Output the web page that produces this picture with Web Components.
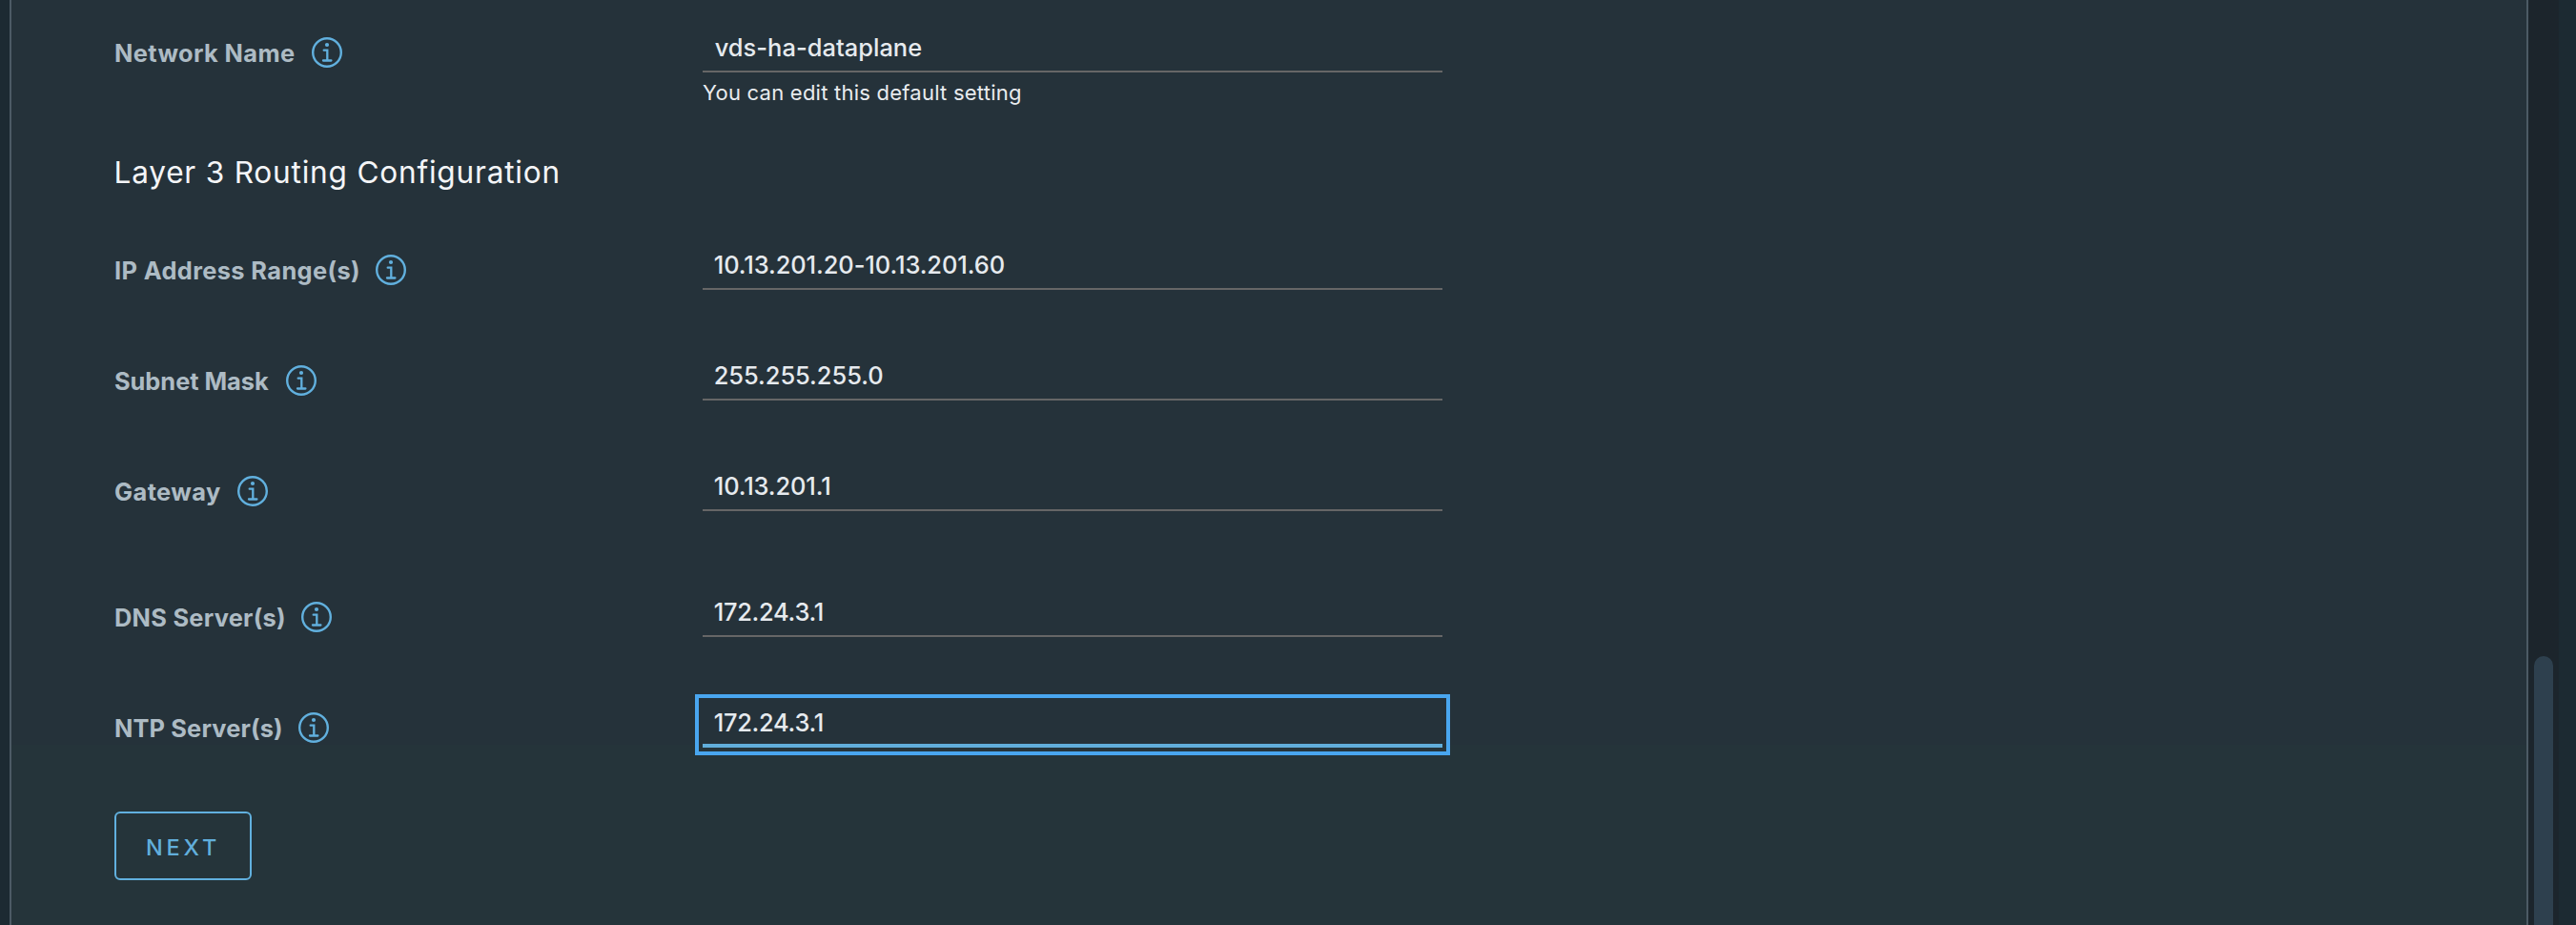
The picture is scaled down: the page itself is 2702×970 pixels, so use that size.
<!DOCTYPE html>
<html lang="en">
<head>
<meta charset="utf-8">
<title>Layer 3 Routing Configuration</title>
<style>
html, body { margin: 0; height: 100%; overflow: hidden; background: #1c2a32; }
body { font-family: Inter, "Liberation Sans", sans-serif; }
</style>
</head>
<body>
<wizard-shell>
  <network-form>
    <form-row ink="188" value-ink="216.5" label="Network Name" value="vds-ha-dataplane" hint="You can edit this default setting"></form-row>
    <section-title></section-title>
    <form-row ink="255" value-ink="303" label="IP Address Range(s)" value="10.13.201.20-10.13.201.60"></form-row>
    <form-row ink="161" value-ink="175.5" label="Subnet Mask" value="255.255.255.0"></form-row>
    <form-row class="wide" ink="110" value-ink="120.5" label="Gateway" value="10.13.201.1"></form-row>
    <form-row ink="177" value-ink="113" label="DNS Server(s)" value="172.24.3.1"></form-row>
    <form-row class="last" ink="174" value-ink="113" label="NTP Server(s)" value="172.24.3.1" focused></form-row>
    <action-button></action-button>
  </network-form>
</wizard-shell>
<script>
// A line of text whose tracking is set so that its glyphs span a given width.
class FitText extends HTMLElement {
  connectedCallback() {
    const text = this.getAttribute('text');
    const width = parseFloat(this.getAttribute('ink'));
    const root = this.attachShadow({ mode: 'open' });
    root.innerHTML = '<style>:host{display:block;white-space:pre;font-kerning:normal}</style><span></span>';
    root.querySelector('span').textContent = text;
    const cs = getComputedStyle(this);
    const ctx = document.createElement('canvas').getContext('2d');
    ctx.font = cs.fontWeight + ' ' + cs.fontSize + ' Inter, "Liberation Sans", sans-serif';
    const m = ctx.measureText(text);
    const ink = m.actualBoundingBoxLeft + m.actualBoundingBoxRight;
    this.style.letterSpacing = ((width - ink) / (text.length - 1)).toFixed(3) + 'px';
    this.style.marginLeft = m.actualBoundingBoxLeft.toFixed(2) + 'px';
    this.style.width = (width - m.actualBoundingBoxLeft) + 'px';
  }
}
customElements.define('fit-text', FitText);

class InfoIcon extends HTMLElement {
  constructor() {
    super();
    this.attachShadow({ mode: 'open' }).innerHTML = `
      <style>:host{display:block;width:32px;height:32px;color:#61b0de}svg{display:block}</style>
      <svg width="32" height="32" viewBox="0 0 32 32" fill="none" stroke="currentColor">
        <circle cx="16" cy="16" r="14.8" stroke-width="2.4"/>
        <circle cx="16" cy="8" r="2.1" fill="currentColor" stroke="none"/>
        <path d="M12.7 13.7h3.6v10.8M12 24.5h8.4" stroke-width="2.3" stroke-linecap="round"/>
      </svg>`;
  }
}
customElements.define('info-icon', InfoIcon);

class FormRow extends HTMLElement {
  connectedCallback() {
    const a = n => this.getAttribute(n);
    const hint = a('hint') ? `<fit-text class="hint" ink="333" text="${a('hint')}"></fit-text>` : '';
    this.attachShadow({ mode: 'open' }).innerHTML = `
      <style>
        :host{display:grid;grid-template-columns:617px 776px;height:48px;margin-bottom:68px}
        :host(.wide){margin-bottom:84px}
        :host(.last){margin-bottom:67px}
        .label{display:flex;padding:11px 0 0 1px;height:32px}
        .label fit-text{font-size:25.4px;line-height:32px;font-weight:700;color:#adbbc4;margin-top:1px}
        info-icon{margin-left:var(--icon-gap)}
        .field{box-sizing:border-box;height:48px;border-bottom:2px solid #666;padding:6px 0 0 12.7px}
        .field fit-text{font-size:25.4px;line-height:32px;font-weight:500;color:#e6eaee}
        :host([focused]) .field{border-bottom:4px solid #61aedb;outline:4px solid #49a6ef;outline-offset:4px}
        .hint{font-size:22px;line-height:28px;color:#e9ecef;margin-top:7px}
      </style>
      <div class="label"><fit-text ink="${a('ink')}" text="${a('label')}"></fit-text><info-icon></info-icon></div>
      <div><div class="field"><fit-text ink="${a('value-ink')}" text="${a('value')}"></fit-text></div>${hint}</div>`;
  }
}
customElements.define('form-row', FormRow);

class SectionTitle extends HTMLElement {
  connectedCallback() {
    this.attachShadow({ mode: 'open' }).innerHTML = `
      <style>:host{display:block;height:112px;padding-left:1.5px}fit-text{font-size:31.6px;line-height:40px;font-weight:400;color:#f4f5f7;padding-top:17px}</style>
      <fit-text ink="464" text="Layer 3 Routing Configuration"></fit-text>`;
  }
}
customElements.define('section-title', SectionTitle);

class ActionButton extends HTMLElement {
  connectedCallback() {
    this.attachShadow({ mode: 'open' }).innerHTML = `
      <style>
        :host{display:block}
        button{display:block;box-sizing:border-box;width:144px;height:72px;border:2px solid #61b0de;border-radius:6px;background:none;
          padding:2px 0 0 32px;font:500 23.5px/68px Inter,"Liberation Sans",sans-serif;color:#61aedb;text-align:left}
      </style>
      <button type="button"><fit-text ink="73" text="NEXT"></fit-text></button>`;
  }
}
customElements.define('action-button', ActionButton);

class NetworkForm extends HTMLElement {
  constructor() {
    super();
    this.attachShadow({ mode: 'open' }).innerHTML = `
      <style>:host{display:block;padding:28px 0 0 108px;--icon-gap:18px}</style><slot></slot>`;
  }
}
customElements.define('network-form', NetworkForm);

class WizardShell extends HTMLElement {
  constructor() {
    super();
    this.attachShadow({ mode: 'open' }).innerHTML = `
      <style>
        :host{display:grid;grid-template-columns:10px 2642px 32px 18px;width:2702px;height:970px;background:#1c2a32}
        .panel{grid-column:2;box-sizing:border-box;border:solid #4c5a65;border-width:0 2px;height:970px;background:linear-gradient(#25323a 781px,#25343a 781px)}
        .track{box-sizing:border-box;background:#1c252c;padding:688px 6px 0}
        .thumb{height:282px;border-radius:10px 10px 0 0;background:#2e404e}
      </style>
      <div class="panel"><slot></slot></div><div class="track"><div class="thumb"></div></div>`;
  }
}
customElements.define('wizard-shell', WizardShell);
</script>
</body>
</html>
